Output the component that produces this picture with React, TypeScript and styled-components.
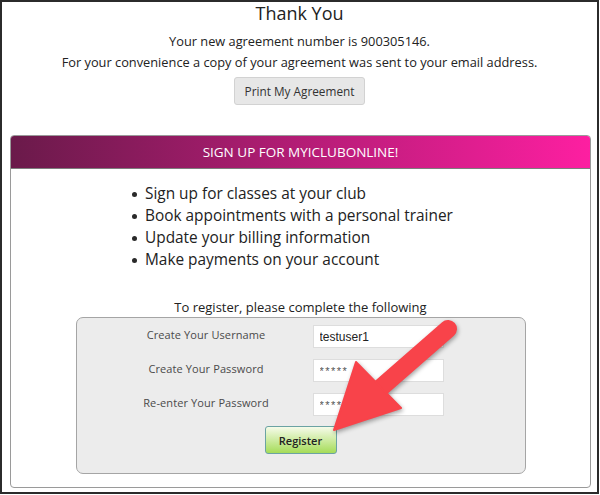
import React from 'react'
import { styled, createGlobalStyle } from 'styled-components'

const GlobalStyle = createGlobalStyle`
  body {
    margin: 0;
    background: #fff;
    font-family: 'Open Sans', 'Liberation Sans', sans-serif;
    color: #222;
  }
`

const features = [
  'Sign up for classes at your club',
  'Book appointments with a personal trainer',
  'Update your billing information',
  'Make payments on your account',
]

const fields = [
  { label: 'Create Your Username', value: 'testuser1', secret: false },
  { label: 'Create Your Password', value: '*****', secret: true },
  { label: 'Re-enter Your Password', value: '*****', secret: true },
]

function PointerArrow() {
  return (
    <ArrowSvg width='100%' height='100%'>
      <line x1='371' y1='11' x2='300' y2='73' stroke='#f8434a' strokeWidth='18' strokeLinecap='round' />
      <polygon points='257,112 279,44 324,90' fill='#f8434a' strokeLinejoin='round' stroke='#f8434a' strokeWidth='2' />
    </ArrowSvg>
  )
}

export default function App() {
  return (
    <>
      <GlobalStyle />
      <Frame>
        <Confirmation>
          <Title>Thank You</Title>
          <Line $gap={7}>Your new agreement number is 900305146.</Line>
          <Line>For your convenience a copy of your agreement was sent to your email address.</Line>
          <PrintButton>Print My Agreement</PrintButton>
        </Confirmation>

        <Card>
          <CardHeader>SIGN UP FOR MYICLUBONLINE!</CardHeader>
          <CardBody>
            <Features>
              {features.map((f) => (
                <Feature key={f}>
                  <Dot />
                  {f}
                </Feature>
              ))}
            </Features>

            <Note>To register, please complete the following</Note>

            <FormBox>
              <FormGrid>
                {fields.map((f) => (
                  <React.Fragment key={f.label}>
                    <Label>{f.label}</Label>
                    <Field $secret={f.secret} defaultValue={f.value} readOnly />
                  </React.Fragment>
                ))}
              </FormGrid>
              <RegisterButton>Register</RegisterButton>
              <PointerArrow />
            </FormBox>
          </CardBody>
        </Card>
      </Frame>
    </>
  )
}

const Frame = styled.div`
  width: 599px;
  height: 494px;
  box-sizing: border-box;
  border: 2px solid #2b2b2b;
  overflow: hidden;
`

const Confirmation = styled.div`
  display: flex;
  flex-direction: column;
  align-items: center;
`

const Title = styled.div`
  font-size: 18px;
  line-height: 22px;
  color: #222;
`

const Line = styled.div<{ $gap?: number }>`
  margin-top: ${(p) => p.$gap ?? 0}px;
  font-size: 12.8px;
  line-height: 21px;
  color: #222;
`

const PrintButton = styled.button`
  margin-top: 4px;
  width: 131px;
  height: 28px;
  background: #e7e7e7;
  border: 1px solid #d2d2d2;
  border-radius: 3px;
  font-family: 'Open Sans', sans-serif;
  font-size: 11.8px;
  color: #333;
  padding: 0;
`

const Card = styled.div`
  margin: 30px 0 0 8px;
  width: 581px;
  height: 353px;
  box-sizing: border-box;
  border: 1px solid #9a9a9a;
  border-radius: 4px;
  display: flex;
  flex-direction: column;
`

const CardHeader = styled.div`
  height: 32px;
  display: flex;
  align-items: center;
  justify-content: center;
  background: linear-gradient(to right, #6a1a4a, #fd1fa1);
  border-bottom: 1px solid #7d7d7d;
  border-radius: 3px 3px 0 0;
  color: #fff;
  font-size: 13.5px;
`

const CardBody = styled.div`
  padding: 14px 0 0;
  display: flex;
  flex-direction: column;
`

const Features = styled.ul`
  list-style: none;
  margin: 0 0 0 120px;
  padding: 0;
`

const Feature = styled.li`
  display: flex;
  align-items: center;
  font-size: 15.4px;
  line-height: 22px;
  color: #222;
`

const Dot = styled.span`
  flex: none;
  width: 5px;
  height: 5px;
  margin: 1px 8px 0 1px;
  border-radius: 50%;
  background: #2a2a2a;
`

const Note = styled.div`
  margin-top: 27px;
  text-align: center;
  font-size: 13px;
  line-height: 18px;
  color: #222;
`

const FormBox = styled.div`
  position: relative;
  margin: 1px auto 0;
  width: 450px;
  height: 157px;
  box-sizing: border-box;
  padding-top: 7px;
  background: #ececec;
  border: 1px solid #a5a5a5;
  border-radius: 7px;
`

const FormGrid = styled.div`
  margin-left: 24px;
  display: grid;
  grid-template-columns: 211px 131px;
  column-gap: 1px;
  row-gap: 11px;
  align-items: center;
`

const Label = styled.div`
  text-align: center;
  font-size: 11px;
  color: #4a4a4a;
  letter-spacing: 0.1px;
  margin-top: -4px;
`

const Field = styled.input<{ $secret: boolean }>`
  height: 23px;
  box-sizing: border-box;
  border: 1px solid #dddddd;
  background: #fff;
  padding: 0 6px;
  outline: none;
  font-family: 'Liberation Sans', Arial, sans-serif;
  font-size: ${(p) => (p.$secret ? '11px' : '12px')};
  letter-spacing: ${(p) => (p.$secret ? '1.5px' : '0')};
  color: ${(p) => (p.$secret ? '#555' : '#222')};
`

const RegisterButton = styled.button`
  display: block;
  margin: 10px auto 0;
  width: 72px;
  height: 28px;
  padding: 0;
  background: linear-gradient(to bottom, #f6fbea, #a5dc58);
  border: 1px solid #6ba3a3;
  border-radius: 3px;
  font-family: 'Open Sans', sans-serif;
  font-size: 11px;
  font-weight: 600;
  color: #222;
`

const ArrowSvg = styled.svg`
  position: absolute;
  left: 0;
  top: 0;
  overflow: visible;
  pointer-events: none;
  filter: drop-shadow(1px 2px 2px rgba(0, 0, 0, 0.35));
`
